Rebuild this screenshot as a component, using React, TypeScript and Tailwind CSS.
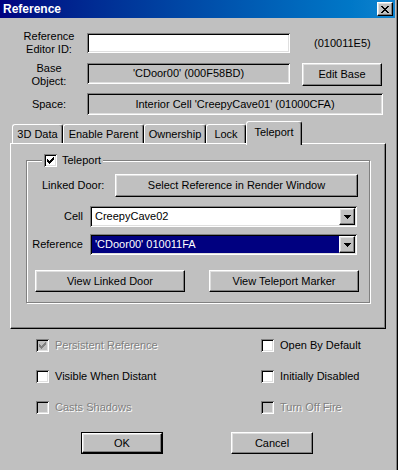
import React from 'react';

// Win classic bevels
const raised =
  'border border-t-white border-l-white border-r-black border-b-black shadow-[inset_-1px_-1px_#808080,inset_1px_1px_#dfdfdf]';
const sunken =
  'shadow-[inset_1px_1px_#808080,inset_-1px_-1px_#ffffff,inset_2px_2px_#000000,inset_-2px_-2px_#dfdfdf]';
const disabledText = 'text-[#808080] [text-shadow:1px_1px_0_#ffffff]';

const CheckGlyph = ({ color }: { color: string }) => (
  <svg width="7" height="7" viewBox="0 0 7 7" shapeRendering="crispEdges" className="absolute left-[3px] top-[3px]">
    <path
      fill={color}
      d="M0 2h1v3H0z M1 3h1v3H1z M2 4h1v3H2z M3 3h1v3H3z M4 2h1v3H4z M5 1h1v3H5z M6 0h1v3H6z"
    />
  </svg>
);

const Checkbox = ({ checked = false, disabled = false }: { checked?: boolean; disabled?: boolean }) => (
  <span className={`relative inline-block w-[13px] h-[13px] shrink-0 ${disabled ? 'bg-[#c0c0c0]' : 'bg-white'} ${sunken}`}>
    {checked && <CheckGlyph color={disabled ? '#808080' : '#000000'} />}
  </span>
);

const Button = ({ children, className = '', isDefault = false }: { children: React.ReactNode; className?: string; isDefault?: boolean }) => (
  <div className={`${isDefault ? 'border border-black' : ''} ${className}`}>
    <div className={`w-full h-full flex items-center justify-center bg-[#c0c0c0] ${raised}`}>{children}</div>
  </div>
);

const Combo = ({ value, selected = false }: { value: string; selected?: boolean }) => (
  <div className={`w-[267px] h-[21px] bg-white p-[2px] flex ${sunken}`}>
    <div className={`flex-1 flex items-center pl-[3px] ${selected ? 'bg-[#000080] text-white' : ''}`}>{value}</div>
    <div className={`w-[16px] h-full flex items-center justify-center bg-[#c0c0c0] ${raised}`}>
      <svg width="7" height="4" viewBox="0 0 7 4" shapeRendering="crispEdges">
        <path fill="#000" d="M0 0h7v1h-1v1h-1v1h-1v1h-1v-1h-1v-1h-1v-1H0z" />
      </svg>
    </div>
  </div>
);

const Tab = ({ label, w, active = false }: { label: string; w: string; active?: boolean }) => (
  <div
    className={`${w} flex items-center justify-center border-t border-l border-t-white border-l-white border-r border-r-black rounded-t-[3px] shadow-[inset_-1px_0_#808080] bg-[#c0c0c0] ${
      active ? 'h-[24px] -mb-[2px] relative z-10 pb-[3px]' : 'h-[19px]'
    }`}
  >
    {label}
  </div>
);

const Option = ({ label, checked, disabled }: { label: string; checked?: boolean; disabled?: boolean }) => (
  <div className="flex items-center h-[13px] gap-[6px]">
    <Checkbox checked={checked} disabled={disabled} />
    <span className={disabled ? disabledText : ''}>{label}</span>
  </div>
);

export default function App() {
  return (
    <div className="w-[398px] h-[470px] bg-[#c0c0c0] shadow-[inset_-1px_0_#000000,inset_-2px_0_#808080] overflow-hidden font-['Liberation_Sans',Arial,sans-serif] text-[11px] text-black leading-none">
      {/* title bar */}
      <div className="w-[395px] h-[18px] flex items-center justify-between bg-gradient-to-r from-[#000080] to-[#1084d0] pl-[3px] pr-[2px]">
        <span className="text-white font-bold text-[12px]">Reference</span>
        <div className={`w-[16px] h-[14px] flex items-center justify-center bg-[#c0c0c0] ${raised}`}>
          <svg width="8" height="7" viewBox="0 0 8 7" shapeRendering="crispEdges">
            <path
              fill="#000"
              d="M0 0h2v1H0z M6 0h2v1H6z M1 1h2v1H1z M5 1h2v1H5z M2 2h4v1H2z M3 3h2v1H3z M2 4h4v1H2z M1 5h2v1H1z M5 5h2v1H5z M0 6h2v1H0z M6 6h2v1H6z"
            />
          </svg>
        </div>
      </div>

      {/* editor id */}
      <div className="flex items-center h-[20px] mt-[15px]">
        <div className="w-[76px] ml-[11px] text-center leading-[13px]">
          Reference
          <br />
          Editor ID:
        </div>
        <div className={`w-[203px] h-[20px] bg-white ${sunken}`} />
        <div className="ml-[24px]">(010011E5)</div>
      </div>

      {/* base object */}
      <div className="flex items-start h-[23px] mt-[10px]">
        <div className="w-[76px] ml-[11px] text-center leading-[13px] mt-[-1px]">
          Base
          <br />
          Object:
        </div>
        <div className={`w-[203px] h-[21px] flex items-center justify-center ${sunken}`}>'CDoor00' (000F58BD)</div>
        <Button className="w-[80px] h-[23px] ml-[12px]">Edit Base</Button>
      </div>

      {/* space */}
      <div className="flex items-center h-[22px] mt-[7px]">
        <div className="w-[76px] ml-[11px] text-center">Space:</div>
        <div className={`w-[296px] h-[22px] flex items-center justify-center ${sunken}`}>
          Interior Cell 'CreepyCave01' (01000CFA)
        </div>
      </div>

      {/* tabs */}
      <div className="flex items-end h-[22px] mt-[6px] ml-[12px]">
        <Tab label="3D Data" w="w-[51px]" />
        <Tab label="Enable Parent" w="w-[81px]" />
        <Tab label="Ownership" w="w-[62px]" />
        <Tab label="Lock" w="w-[40px]" />
        <Tab label="Teleport" w="w-[56px]" active />
      </div>

      {/* tab panel */}
      <div className="ml-[10px] w-[376px] h-[186px] border border-t-white border-l-white border-r-black border-b-black shadow-[inset_-1px_-1px_#808080] pl-[15px] pt-[16px]">
        <div className="relative w-[344px] h-[143px] border border-[#808080] shadow-[1px_1px_0_#ffffff,inset_1px_1px_0_#ffffff] flex flex-col">
          <div className="absolute left-[15px] top-[-7px] flex items-center gap-[5px] bg-[#c0c0c0] pl-[2px] pr-[2px] h-[13px]">
            <Checkbox checked />
            <span>Teleport</span>
          </div>

          <div className="flex items-center h-[23px] mt-[13px]">
            <div className="w-[73px] ml-[15px]">Linked Door:</div>
            <Button className="w-[243px] h-[23px]">Select Reference in Render Window</Button>
          </div>

          <div className="flex items-center h-[21px] mt-[9px]">
            <div className="w-[56px] text-right mr-[7px]">Cell</div>
            <Combo value="CreepyCave02" />
          </div>

          <div className="flex items-center h-[21px] mt-[7px]">
            <div className="w-[56px] text-right mr-[7px]">Reference</div>
            <Combo value="'CDoor00' 010011FA" selected />
          </div>

          <div className="flex items-center h-[22px] mt-[15px] ml-[8px] gap-[24px]">
            <Button className="w-[150px] h-[22px]">View Linked Door</Button>
            <Button className="w-[150px] h-[22px]">View Teleport Marker</Button>
          </div>
        </div>
      </div>

      {/* flags */}
      <div className="grid grid-cols-[225px_1fr] gap-y-[18px] ml-[36px] mt-[10px]">
        <Option label="Persistent Reference" checked disabled />
        <Option label="Open By Default" />
        <Option label="Visible When Distant" />
        <Option label="Initially Disabled" />
        <Option label="Casts Shadows" disabled />
        <Option label="Turn Off Fire" disabled />
      </div>

      {/* dialog buttons */}
      <div className="flex ml-[81px] mt-[18px] gap-[68px]">
        <Button className="w-[82px] h-[22px]" isDefault>
          OK
        </Button>
        <Button className="w-[82px] h-[22px]">Cancel</Button>
      </div>
    </div>
  );
}
